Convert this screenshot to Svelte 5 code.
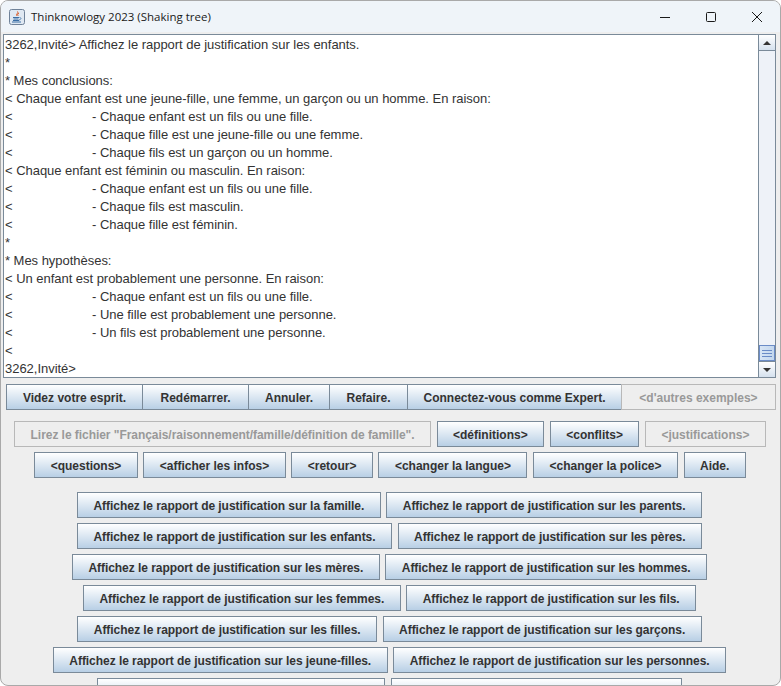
<script>
  const lines = [
    { t: '3262,Invité> Affichez le rapport de justification sur les enfants.' },
    { t: '*' },
    { t: '* Mes conclusions:' },
    { t: '< Chaque enfant est une jeune-fille, une femme, un garçon ou un homme. En raison:' },
    { t: '- Chaque enfant est un fils ou une fille.', sub: true },
    { t: '- Chaque fille est une jeune-fille ou une femme.', sub: true },
    { t: '- Chaque fils est un garçon ou un homme.', sub: true },
    { t: '< Chaque enfant est féminin ou masculin. En raison:' },
    { t: '- Chaque enfant est un fils ou une fille.', sub: true },
    { t: '- Chaque fils est masculin.', sub: true },
    { t: '- Chaque fille est féminin.', sub: true },
    { t: '*' },
    { t: '* Mes hypothèses:' },
    { t: '< Un enfant est probablement une personne. En raison:' },
    { t: '- Chaque enfant est un fils ou une fille.', sub: true },
    { t: '- Une fille est probablement une personne.', sub: true },
    { t: '- Un fils est probablement une personne.', sub: true },
    { t: '<' },
    { t: '3262,Invité>' }
  ];

  const toolbar = [
    { label: 'Videz votre esprit.' },
    { label: 'Redémarrer.' },
    { label: 'Annuler.' },
    { label: 'Refaire.' },
    { label: 'Connectez-vous comme Expert.' },
    { label: "<d'autres exemples>", off: true }
  ];

  const rowA = [
    { label: 'Lirez le fichier "Français/raisonnement/famille/définition de famille".', off: true, long: true },
    { label: '<définitions>' },
    { label: '<conflits>' },
    { label: '<justifications>', off: true }
  ];

  const rowB = ['<questions>', '<afficher les infos>', '<retour>', '<changer la langue>', '<changer la police>', 'Aide.'];

  const p = 'Affichez le rapport de justification sur ';
  const reports = [
    ['la famille.', 'les parents.'],
    ['les enfants.', 'les pères.'],
    ['les mères.', 'les hommes.'],
    ['les femmes.', 'les fils.'],
    ['les filles.', 'les garçons.'],
    ['les jeune-filles.', 'les personnes.']
  ];
</script>

<div class="window">
  <header class="titlebar">
    <svg class="java" width="16" height="16" viewBox="0 0 16 16">
      <rect x="0.5" y="0.5" width="15" height="15" rx="2" fill="#dfe8f2" stroke="#6f8299" />
      <path d="M8.5 2.5c1.5 1.5-2 2.5-.7 4.3M10 4c-1.5 1-1.7 1.6-.8 2.8" fill="none" stroke="#d9541e" stroke-width="1" />
      <path d="M4 8.5h6M4.5 10h5M4 11.5h6" stroke="#3a6ea5" stroke-width="1" />
      <path d="M3 13h9" stroke="#3a6ea5" stroke-width="1" />
      <path d="M10.5 8.5c2 0 2 2-.5 2.5" fill="none" stroke="#3a6ea5" stroke-width="0.8" />
    </svg>
    <span class="title">Thinknowlogy 2023 (Shaking tree)</span>
    <div class="controls">
      <svg width="12" height="12" viewBox="0 0 12 12"><path d="M1 6.5h10" stroke="#1a1a1a" /></svg>
      <svg width="12" height="12" viewBox="0 0 12 12"><rect x="1.5" y="1.5" width="9" height="9" rx="1" fill="none" stroke="#1a1a1a" /></svg>
      <svg width="12" height="12" viewBox="0 0 12 12"><path d="M1 1l10 10M11 1L1 11" stroke="#1a1a1a" /></svg>
    </div>
  </header>

  <div class="body">
    <div class="scrollpane">
      <div class="log">
        {#each lines as line}
          {#if line.sub}
            <div class="line"><span class="lt">&lt;</span>{line.t}</div>
          {:else}
            <div class="line">{line.t}</div>
          {/if}
        {/each}
      </div>
      <div class="scrollbar">
        <div class="arrow"><span class="tri up"></span></div>
        <div class="track">
          <div class="thumb"><span></span><span></span><span></span></div>
        </div>
        <div class="arrow"><span class="tri down"></span></div>
      </div>
    </div>

    <div class="toolbar">
      {#each toolbar as b}
        <button class="btn" class:off={b.off}>{b.label}</button>
      {/each}
    </div>

    <div class="row first">
      {#each rowA as b}
        <button class="btn" class:off={b.off} class:tight={b.long}>{b.label}</button>
      {/each}
    </div>
    <div class="row">
      {#each rowB as label}
        <button class="btn">{label}</button>
      {/each}
    </div>

    <div class="reports">
      {#each reports as pair}
        <div class="row">
          <button class="btn tight">{p + pair[0]}</button>
          <button class="btn tight">{p + pair[1]}</button>
        </div>
      {/each}
      <div class="row">
        <button class="btn cut-a" aria-label="Coupé"></button>
        <button class="btn cut-b" aria-label="Coupé"></button>
      </div>
    </div>
  </div>
</div>

<style>
  :global(body) {
    background: #fff;
  }

  .window {
    width: 781px;
    height: 686px;
    box-sizing: border-box;
    border: 1px solid #a9a9a9;
    border-radius: 8px;
    background: #eeeeee;
    overflow: hidden;
    display: flex;
    flex-direction: column;
    font-family: "Liberation Sans", Arial, sans-serif;
  }

  .titlebar {
    flex: 0 0 31px;
    display: flex;
    align-items: center;
    background: #eff4f9;
    padding-left: 8px;
  }

  .java {
    margin-right: 6px;
  }

  .title {
    font-family: "Open Sans", sans-serif;
    font-size: 11.5px;
    color: #1a1a1a;
  }

  .controls {
    margin-left: auto;
    display: flex;
    gap: 34px;
    padding-right: 17px;
    align-items: center;
  }

  .controls svg {
    display: block;
  }

  .body {
    flex: 1;
    min-height: 0;
    padding: 2px 4px 0 2px;
  }

  .scrollpane {
    height: 344px;
    box-sizing: border-box;
    border: 1px solid #7a8a99;
    background: #fff;
    display: flex;
  }

  .log {
    flex: 1;
    padding: 1px 0 0 1px;
    font-size: 13px;
    letter-spacing: -0.03px;
    line-height: 18px;
    color: #333333;
    white-space: nowrap;
    overflow: hidden;
  }

  .line {
    height: 18px;
    display: flex;
  }

  .lt {
    width: 87px;
    flex: none;
  }

  .scrollbar {
    width: 16px;
    flex: none;
    display: flex;
    flex-direction: column;
    background: #eef2f8;
    border-left: 1px solid #7a8a99;
  }

  .arrow {
    height: 15px;
    flex: none;
    display: flex;
    align-items: center;
    justify-content: center;
    background: linear-gradient(#ffffff, #d5e1ee);
    border-bottom: 1px solid #7a8a99;
  }

  .arrow:last-child {
    border-bottom: none;
    border-top: 1px solid #7a8a99;
  }

  .tri {
    width: 0;
    height: 0;
    border-left: 4px solid transparent;
    border-right: 4px solid transparent;
  }

  .up {
    border-bottom: 4px solid #333;
  }

  .down {
    border-top: 4px solid #333;
  }

  .track {
    flex: 1;
    display: flex;
    flex-direction: column;
    justify-content: flex-end;
  }

  .thumb {
    height: 16px;
    box-sizing: border-box;
    border: 1px solid #6b8cc7;
    background: linear-gradient(90deg, #d7e5f5, #c3d7ee);
    display: flex;
    flex-direction: column;
    align-items: center;
    justify-content: center;
    gap: 2px;
  }

  .thumb span {
    width: 10px;
    height: 1px;
    background: #6b8cc7;
  }

  .toolbar {
    display: grid;
    grid-template-columns: 137px 106px 81px 78px 214px 154px;
    margin: 6px 0 0 3px;
  }

  .toolbar .btn {
    margin-left: -1px;
    padding-left: 0;
    padding-right: 0;
  }

  .toolbar .btn:first-child {
    margin-left: 0;
  }

  .row {
    display: flex;
    justify-content: center;
    gap: 5.5px;
    margin-top: 5px;
    padding-left: 1px;
  }

  .row.first {
    margin-top: 11px;
  }

  .reports {
    margin-top: 14px;
  }

  .reports .row {
    padding-left: 0;
  }

  .btn {
    flex: none;
    height: 26px;
    padding: 1px 15.5px 0;
    box-sizing: border-box;
    border: 1px solid #7a8a99;
    border-radius: 0;
    background: linear-gradient(#ffffff, #b8cfe5);
    font-family: inherit;
    font-size: 12px;
    font-weight: bold;
    color: #333333;
    white-space: nowrap;
  }

  .btn.tight {
    letter-spacing: -0.05px;
  }

  .btn.off {
    background: #eeeeee;
    border-color: #b8b8b8;
    color: #999999;
  }

  .cut-a {
    width: 288px;
  }

  .cut-b {
    width: 291px;
  }
</style>
